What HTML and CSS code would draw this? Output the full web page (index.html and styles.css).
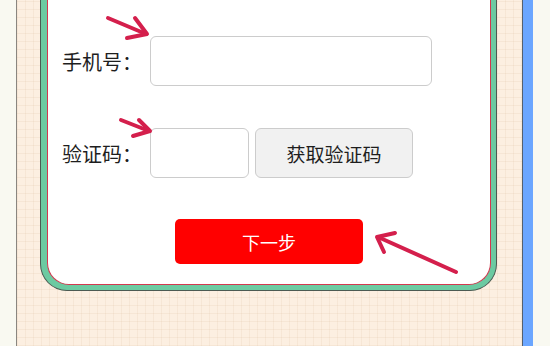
FILE: index.html
```html
<!DOCTYPE html>
<html lang="zh-CN">
  <head>
    <meta charset="UTF-8" />
    <meta name="viewport" content="width=device-width, initial-scale=1.0" />
    <title>手机验证</title>
    <link rel="stylesheet" href="styles.css">
  </head>
  <body>
    <div class="screen">
      <div class="side"></div>
      <div class="desk">
        <div class="frame">
          <div class="card">
            <div class="form-row">
              <label class="form-label">手机号：</label>
              <input type="text" class="phone-input" />
            </div>
            <div class="form-row">
              <label class="form-label">验证码：</label>
              <input type="text" class="code-input" />
              <button class="code-btn">获取验证码</button>
            </div>
            <div class="next-row">
              <button class="next-btn">下一步</button>
            </div>
          </div>
        </div>
      </div>
      <div class="blue-bar"></div>
      <div class="side"></div>
    </div>

    <svg class="arrows" width="550" height="346" viewBox="0 0 550 346">
      <g stroke="#d41f4c" stroke-width="4" stroke-linecap="round" stroke-linejoin="round" fill="none">
        <path d="M108 18 L146 34" />
        <path d="M135 18 L147 34 L127 38" />
        <path d="M121 120 L149 131" />
        <path d="M139 120 L150 131 L133 136" />
        <path d="M456 272 L378 237" />
        <path d="M395 233 L377 237 L384 252" />
      </g>
    </svg>
  </body>
</html>
```

FILE: styles.css
```css
body {
  margin: 0;
  padding: 0;
  font-family: "Noto Sans CJK SC", "Noto Sans", sans-serif;
  background-color: #f9f9f1;
}

.screen {
  display: flex;
  height: 346px;
  overflow: hidden;
}

.side {
  width: 16px;
  flex: none;
}

.side:last-child {
  flex: 1;
}

.desk {
  box-sizing: border-box;
  width: 506px;
  flex: none;
  border-left: 1px solid #8a8680;
  padding-left: 23px;
  padding-right: 25px;
  background-color: #fcefe1;
  background-image:
    repeating-linear-gradient(0deg, rgba(220, 190, 160, 0.18) 0 1px, transparent 1px 8px),
    repeating-linear-gradient(90deg, rgba(220, 190, 160, 0.18) 0 1px, transparent 1px 8px);
}

.blue-bar {
  width: 10px;
  flex: none;
  border-left: 1px solid #55606e;
  background-color: #6ba6ff;
}

.frame {
  background-color: #6ccaa1;
  border: 1px solid #4b5a52;
  border-top: none;
  border-radius: 0 0 27px 27px;
  padding: 0 5px 5px 6px;
}

.card {
  background-color: #ffffff;
  border: 1px solid #d2374e;
  border-top: none;
  border-radius: 0 0 22px 22px;
  padding: 36px 0 20px 14px;
}

.form-row {
  display: flex;
  align-items: center;
  height: 50px;
  margin-bottom: 42px;
}

.form-label {
  width: 88px;
  font-size: 20px;
  color: #1e1e1e;
}

.phone-input,
.code-input {
  box-sizing: border-box;
  height: 50px;
  border: 1.5px solid #cccccc;
  border-radius: 6px;
  background: #fff;
}

.phone-input {
  width: 282px;
}

.code-input {
  width: 99px;
}

.code-btn {
  box-sizing: border-box;
  width: 158px;
  height: 50px;
  margin-left: 6px;
  border: 1.5px solid #cccccc;
  border-radius: 6px;
  background-color: #f1f1f1;
  font-family: inherit;
  font-size: 19px;
  color: #1e1e1e;
}

.next-row {
  display: flex;
  justify-content: center;
  margin-top: -1px;
  padding-right: 14px;
}

.next-btn {
  width: 188px;
  height: 45px;
  border: none;
  border-radius: 5px;
  background-color: #ff0000;
  color: #fff;
  font-family: inherit;
  font-size: 18px;
}

.arrows {
  position: absolute;
  top: 0;
  left: 0;
  pointer-events: none;
}
```
